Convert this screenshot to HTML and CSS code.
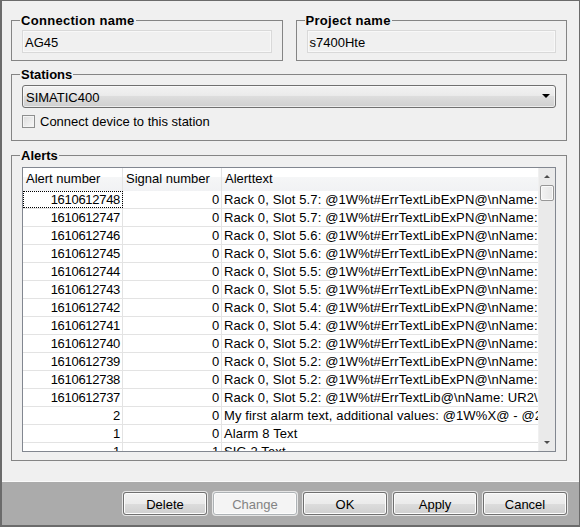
FILE: index.html
```html
<!DOCTYPE html>
<html>
<head>
<meta charset="utf-8">
<link rel="stylesheet" href="styles.css">
</head>
<body>
<div class="window">
  <div class="content">
    <div class="top-row">
      <fieldset class="group g-name">
        <legend>Connection name</legend>
        <div class="field">AG45</div>
      </fieldset>
      <fieldset class="group g-name">
        <legend>Project name</legend>
        <div class="field">s7400Hte</div>
      </fieldset>
    </div>
    <fieldset class="group g-stations">
      <legend>Stations</legend>
      <div class="combo"><span class="combo-text">SIMATIC400</span><span class="combo-arrow"></span></div>
      <div class="check"><span class="check-box"></span><span>Connect device to this station</span></div>
    </fieldset>
    <fieldset class="group g-alerts">
      <legend>Alerts</legend>
      <div class="grid">
        <div class="grid-body">
          <div class="row head">
            <div class="cell">Alert number</div>
            <div class="cell">Signal number</div>
            <div class="cell">Alerttext</div>
          </div>
          <div class="row">
            <div class="cell num focus">1610612748</div><div class="cell num">0</div><div class="cell txt">Rack 0, Slot 5.7: @1W%t#ErrTextLibExPN@\nName: R0/S5.7</div>
          </div>
          <div class="row">
            <div class="cell num">1610612747</div><div class="cell num">0</div><div class="cell txt">Rack 0, Slot 5.7: @1W%t#ErrTextLibExPN@\nName: R0/S5.7</div>
          </div>
          <div class="row">
            <div class="cell num">1610612746</div><div class="cell num">0</div><div class="cell txt">Rack 0, Slot 5.6: @1W%t#ErrTextLibExPN@\nName: R0/S5.6</div>
          </div>
          <div class="row">
            <div class="cell num">1610612745</div><div class="cell num">0</div><div class="cell txt">Rack 0, Slot 5.6: @1W%t#ErrTextLibExPN@\nName: R0/S5.6</div>
          </div>
          <div class="row">
            <div class="cell num">1610612744</div><div class="cell num">0</div><div class="cell txt">Rack 0, Slot 5.5: @1W%t#ErrTextLibExPN@\nName: R0/S5.5</div>
          </div>
          <div class="row">
            <div class="cell num">1610612743</div><div class="cell num">0</div><div class="cell txt">Rack 0, Slot 5.5: @1W%t#ErrTextLibExPN@\nName: R0/S5.5</div>
          </div>
          <div class="row">
            <div class="cell num">1610612742</div><div class="cell num">0</div><div class="cell txt">Rack 0, Slot 5.4: @1W%t#ErrTextLibExPN@\nName: R0/S5.4</div>
          </div>
          <div class="row">
            <div class="cell num">1610612741</div><div class="cell num">0</div><div class="cell txt">Rack 0, Slot 5.4: @1W%t#ErrTextLibExPN@\nName: R0/S5.4</div>
          </div>
          <div class="row">
            <div class="cell num">1610612740</div><div class="cell num">0</div><div class="cell txt">Rack 0, Slot 5.2: @1W%t#ErrTextLibExPN@\nName: R0/S5.2</div>
          </div>
          <div class="row">
            <div class="cell num">1610612739</div><div class="cell num">0</div><div class="cell txt">Rack 0, Slot 5.2: @1W%t#ErrTextLibExPN@\nName: R0/S5.2</div>
          </div>
          <div class="row">
            <div class="cell num">1610612738</div><div class="cell num">0</div><div class="cell txt">Rack 0, Slot 5.2: @1W%t#ErrTextLibExPN@\nName: R0/S5.2</div>
          </div>
          <div class="row">
            <div class="cell num">1610612737</div><div class="cell num">0</div><div class="cell txt">Rack 0, Slot 5.2: @1W%t#ErrTextLib@\nName: UR2\nSlot</div>
          </div>
          <div class="row">
            <div class="cell num">2</div><div class="cell num">0</div><div class="cell txt">My first alarm text, additional values: @1W%X@ - @2W%X@</div>
          </div>
          <div class="row">
            <div class="cell num">1</div><div class="cell num">0</div><div class="cell txt">Alarm 8 Text</div>
          </div>
          <div class="row">
            <div class="cell num">1</div><div class="cell num">1</div><div class="cell txt">SIG 2 Text</div>
          </div>
        </div>
        <div class="vscroll">
          <div class="sb-btn"><span class="sb-up"></span></div>
          <div class="sb-track"><div class="sb-thumb"></div></div>
          <div class="sb-btn"><span class="sb-down"></span></div>
        </div>
      </div>
    </fieldset>
  </div>
  <div class="buttons">
    <button class="btn">Delete</button>
    <button class="btn" disabled>Change</button>
    <button class="btn">OK</button>
    <button class="btn">Apply</button>
    <button class="btn">Cancel</button>
  </div>
</div>
</body>
</html>
```
FILE: styles.css
```css
* { box-sizing: border-box; }
html, body { margin: 0; padding: 0; }
body {
  font: 13px/15px "Liberation Sans", Arial, sans-serif;
  color: #000;
  background: #f0f0f0;
}
.window {
  width: 580px;
  height: 527px;
  display: flex;
  flex-direction: column;
  background: #f0f0f0;
  border-top: 1px solid #6b6b6b;
  border-left: 2px solid #6b6b6b;
  border-right: 1px solid #6b6b6b;
  border-bottom: 2px solid #6b6b6b;
}
.content {
  flex: 1;
  padding: 12px 12px 0 9px;
  display: flex;
  flex-direction: column;
}
.top-row {
  display: flex;
  gap: 13px;
}
.group {
  margin: 0;
  min-width: 0;
  border: 1px solid #858585;
  padding: 0 10px;
}
.group legend {
  font-weight: bold;
  padding: 0 1px;
  margin-left: -2px;
  line-height: 15px;
}
.g-name {
  flex: 1;
  padding: 2px 10px 7px;
}
.g-name legend {
  letter-spacing: 0.3px;
}
.field {
  height: 23px;
  padding: 4px 2px 0;
  border: 1px solid #d9d9d9;
  background: #f0f0f0;
  box-shadow: inset 0 0 0 1px #f8f8f8;
}
.g-stations {
  margin-top: 6px;
  padding: 3px 10px 11px;
}
.combo {
  height: 23px;
  display: flex;
  align-items: flex-start;
  justify-content: space-between;
  padding: 4px 5px 0 3px;
  border: 1px solid #707070;
  border-radius: 3px;
  background: linear-gradient(#f2f2f2 0%, #ebebeb 45%, #dddddd 50%, #cfcfcf 100%);
  box-shadow: inset 0 0 0 1px rgba(255,255,255,0.6);
}
.combo-arrow {
  margin-top: 4px;
  width: 0;
  height: 0;
  border-left: 4px solid transparent;
  border-right: 4px solid transparent;
  border-top: 4px solid #000;
}
.check {
  margin-top: 6px;
  display: flex;
  align-items: center;
  gap: 5px;
}
.check-box {
  width: 13px;
  height: 13px;
  border: 1px solid #8e8f8f;
  background: linear-gradient(135deg, #dcdcdc, #f8f8f8);
  box-shadow: inset 0 0 0 1px #f4f4f4;
}
.g-alerts {
  margin-top: 7px;
  padding: 4px 10px 8px;
}
.grid {
  height: 285px;
  border: 1px solid #828790;
  display: flex;
  background: #fff;
}
.grid-body {
  flex: 1;
  overflow: hidden;
}
.row {
  display: grid;
  grid-template-columns: 100px 99px 1fr;
  height: 18px;
  border-bottom: 1px solid #e3e3e3;
}
.row .cell {
  white-space: nowrap;
  overflow: hidden;
  line-height: 17px;
}
.row .cell:nth-child(1), .row .cell:nth-child(2) {
  border-right: 1px solid #e3e3e3;
}
.row.head {
  height: 23px;
  border-bottom: 0;
  background: linear-gradient(#ffffff 0%, #ffffff 40%, #f5f6f7 40%, #f1f2f4 100%);
}
.row.head .cell {
  line-height: 15px;
  padding: 3px 3px 0;
  letter-spacing: 0;
}
.cell.num {
  text-align: right;
  padding-right: 2px;
  letter-spacing: -0.3px;
}
.cell.txt {
  padding-left: 2px;
  letter-spacing: 0.12px;
}
.cell.focus {
  outline: 1px dotted #000;
  outline-offset: -1px;
}
.vscroll {
  width: 17px;
  display: flex;
  flex-direction: column;
  background: #eaeaea;
  border-left: 1px solid #f0f0f0;
}
.sb-btn {
  height: 17px;
  display: flex;
  align-items: center;
  justify-content: center;
}
.sb-up, .sb-down {
  width: 0;
  height: 0;
  border-left: 3px solid transparent;
  border-right: 3px solid transparent;
}
.sb-up { border-bottom: 3px solid #4d4d4d; }
.sb-down { border-top: 3px solid #4d4d4d; }
.sb-track {
  flex: 1;
  padding: 0 1px;
}
.sb-thumb {
  height: 16px;
  border: 1px solid #979797;
  border-radius: 2px;
  background: linear-gradient(90deg, #f3f3f3, #e6e6e6);
  box-shadow: inset 0 0 0 1px #fafafa;
}
.buttons {
  flex: none;
  height: 44px;
  border-top: 1px solid #fafafa;
  background: #ababab;
  display: flex;
  justify-content: flex-end;
  align-items: flex-start;
  gap: 6px;
  padding: 10px 12px 0 0;
}
.btn {
  width: 84px;
  height: 23px;
  margin: 0;
  padding: 1px 0 0;
  font: 13px/15px "Liberation Sans", Arial, sans-serif;
  color: #000;
  border: 1px solid #707070;
  border-radius: 3px;
  background: linear-gradient(#f2f2f2 0%, #ebebeb 50%, #dddddd 50%, #cfcfcf 100%);
  box-shadow: inset 0 0 0 1px #fcfcfc, 0 0 0 1px #e6e6e6;
}
.btn:disabled {
  color: #838383;
  border-color: #adb2b5;
  background: #f4f4f4;
}
```
